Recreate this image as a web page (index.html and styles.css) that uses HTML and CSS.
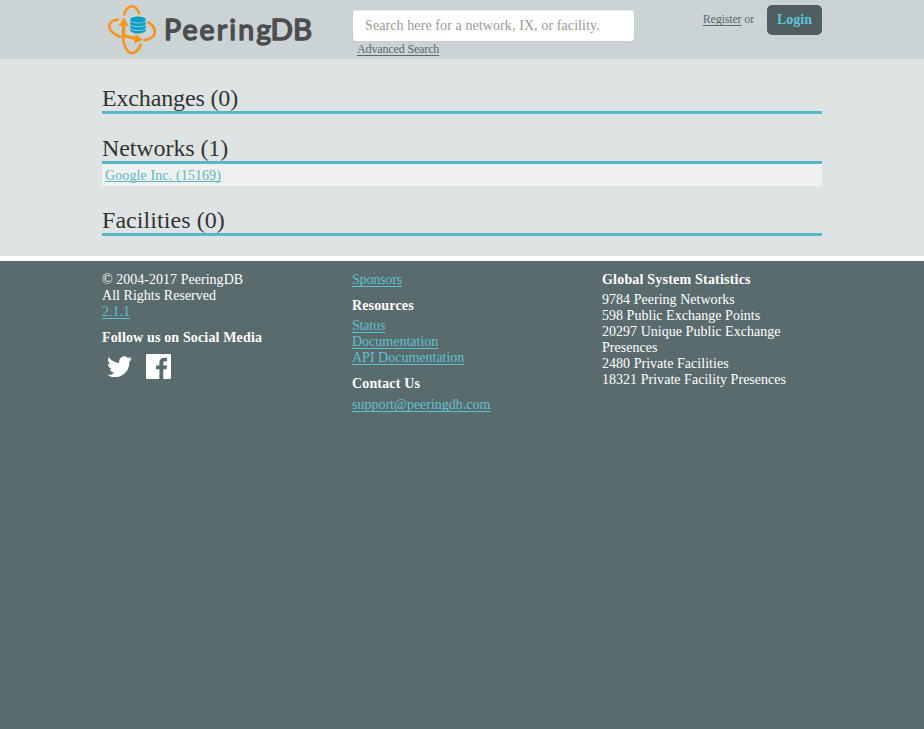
FILE: index.html
```html
<!DOCTYPE html>
<html lang="en">
<head>
<meta charset="utf-8">
<title>PeeringDB</title>
<link rel="stylesheet" href="styles.css">
</head>
<body>
<header class="header">
  <div class="container header-row">
    <a class="logo" aria-label="PeeringDB">
      <svg width="216" height="56" viewBox="102 0 216 56">
        <g fill="none" stroke="#f7941e" stroke-width="2.600">
          <path d="M124 15.500C125.500 9.500 128.500 6.200 132 6.200C135.500 6.200 138 9.500 139.500 14.500"/>
          <path d="M141 43.500C139 49.500 136 53 132 53C127.500 53 123.500 46 123 37"/>
          <path d="M119 19.500C113 20 109.200 22.500 109.200 26.500C109.200 31 114.500 34.500 121 37.200"/>
          <path d="M143.500 40.300C150 39.500 154.800 36.500 154.800 32C154.800 27.500 151.500 24 147.500 22"/>
        </g>
        <path d="M123.500 36.500V24" stroke="#f7941e" stroke-width="3.600" fill="none"/>
        <path d="M118.800 26L123.800 17.500L128.800 26Z" fill="#f7941e"/>
        <path d="M121.800 35Q129 37.500 137 38.500" stroke="#f7941e" stroke-width="3.400" fill="none"/>
        <path d="M135.500 34L143 39.700L134 43.500Z" fill="#f7941e"/>
        <path d="M130.300 19.500V30.500A7.700 2.900 0 0 0 145.700 30.500V19.500Z" fill="#0a9fc3"/>
        <ellipse cx="138" cy="19.300" rx="7.700" ry="2.800" fill="#0a9fc3"/>
        <path fill="none" stroke="#a9d0da" stroke-width=".8" d="M130.300 20.300A7.700 2.700 0 0 0 145.700 20.300M130.300 24.100A7.700 2.700 0 0 0 145.700 24.100M130.300 27.900A7.700 2.700 0 0 0 145.700 27.900"/>
        <g class="wordmark">
          <text x="164" y="39.800" textLength="107" lengthAdjust="spacing">Peering</text>
          <text x="270.500" y="39.800" textLength="41.500" lengthAdjust="spacingAndGlyphs">DB</text>
        </g>
      </svg>
    </a>
    <div class="search">
      <input class="search-input" type="text" placeholder="Search here for a network, IX, or facility.">
      <a class="advanced">Advanced Search</a>
    </div>
    <div class="account">
      <span class="signup"><a class="register">Register</a> or</span>
      <a class="login">Login</a>
    </div>
  </div>
</header>
<main class="main">
  <div class="container">
    <h2 class="results-title exchanges">Exchanges (0)</h2>
    <h2 class="results-title networks">Networks (1)</h2>
    <div class="result"><a class="link">Google Inc. (15169)</a></div>
    <h2 class="results-title facilities">Facilities (0)</h2>
  </div>
</main>
<footer class="footer">
  <div class="container columns">
    <div class="column">
      <div>© 2004-2017 PeeringDB</div>
      <div>All Rights Reserved</div>
      <div><a class="link">2.1.1</a></div>
      <h3 class="heading">Follow us on Social Media</h3>
      <div class="social">
        <svg width="25" height="21" viewBox="0 2 24 19.500" preserveAspectRatio="none"><path fill="#fff" d="M24 4.600a10 10 0 0 1-2.800.8 5 5 0 0 0 2.100-2.700 10 10 0 0 1-3.100 1.200 4.900 4.900 0 0 0-8.400 4.500A14 14 0 0 1 1.700 3.100a4.900 4.900 0 0 0 1.500 6.600 5 5 0 0 1-2.200-.6 4.900 4.900 0 0 0 3.900 4.900 5 5 0 0 1-2.200.1 4.900 4.900 0 0 0 4.600 3.400A10 10 0 0 1 0 19.500 14 14 0 0 0 21.500 7.100 10 10 0 0 0 24 4.600z"/></svg>
        <svg width="25" height="25" viewBox="0 0 25 25"><path fill="#fff" d="M1 0H24Q25 0 25 1V24Q25 25 24 25H17.300V15.300H20.500L21 11.500H17.300V9.100C17.300 8 17.600 7.300 19.200 7.300H21.100V3.900C20.800 3.800 19.600 3.700 18.300 3.700C15.300 3.700 13.400 5.500 13.400 8.700V11.500H10V15.300H13.400V25H1Q0 25 0 24V1Q0 0 1 0Z"/></svg>
      </div>
    </div>
    <div class="column">
      <div><a class="link tight">Sponsors</a></div>
      <h3 class="heading">Resources</h3>
      <div><a class="link tight">Status</a></div>
      <div><a class="link">Documentation</a></div>
      <div><a class="link">API Documentation</a></div>
      <h3 class="heading">Contact Us</h3>
      <div class="contact"><a class="link">support@peeringdb.com</a></div>
    </div>
    <div class="column stats">
      <h3 class="heading first">Global System Statistics</h3>
      <div>9784 Peering Networks</div>
      <div>598 Public Exchange Points</div>
      <div>20297 Unique Public Exchange Presences</div>
      <div>2480 Private Facilities</div>
      <div>18321 Private Facility Presences</div>
    </div>
  </div>
</footer>
</body>
</html>
```
FILE: styles.css
```css
* { box-sizing: border-box; }
body {
  margin: 0;
  min-height: 729px;
  display: flex;
  flex-direction: column;
  font: 14px/16px "Liberation Serif", serif;
  background: #5a6b6d;
}
.container { width: 720px; margin: 0 auto; }
.header { height: 59px; background: #cbd3d5; color: #5a6b6d; }
.header-row { display: flex; }
.logo { width: 250px; height: 56px; }
.logo svg { display: block; }
.wordmark {
  font: 400 28.5px Lato, sans-serif;
  fill: #4d4d4f;
  stroke: #4d4d4f;
  stroke-width: 1.5px;
  stroke-linejoin: round;
}
.search { width: 283px; padding-top: 9px; }
.search-input {
  display: block;
  width: 283px;
  height: 33px;
  padding: 0 12px;
  border: 1px solid #ccc;
  border-radius: 4px;
  box-shadow: inset 0 1px 1px rgba(0, 0, 0, .075);
  background: #fff;
  font: 14px "Liberation Serif", serif;
  letter-spacing: .095px;
}
.search-input::placeholder { color: #999; }
.advanced, .register {
  text-decoration: underline 1px;
  text-underline-offset: 2px;
  text-decoration-skip-ink: none;
}
.advanced {
  display: block;
  width: max-content;
  margin: -1px 0 0 5px;
  font-size: 12px;
  letter-spacing: -.14px;
}
.account {
  flex: 1;
  display: flex;
  justify-content: flex-end;
  gap: 13px;
  padding-top: 5px;
  font-size: 12px;
  line-height: 28px;
}
.signup { letter-spacing: -.16px; }
.login {
  width: 55px;
  height: 30px;
  border-radius: 5px;
  background: #4f5f61;
  color: #5fc5d5;
  font-size: 14px;
  font-weight: bold;
  line-height: 30px;
  text-align: center;
}
.main { height: 202px; padding-top: 25px; background: #dee4e4; border-bottom: 5px solid #fff; }
.results-title {
  height: 30px;
  margin: 0 0 20px;
  border-bottom: 3px solid #5bb7c5;
  color: #333;
  font-size: 24px;
  font-weight: normal;
  line-height: 28px;
}
.exchanges { letter-spacing: -.15px; }
.networks { letter-spacing: -.1px; }
.facilities { letter-spacing: .06px; }
.result {
  height: 22px;
  margin: -20px 0 20px;
  padding: 4px 3px 2px;
  background: #eff1f1;
  letter-spacing: .11px;
}
.link {
  color: #5bb7c5;
  text-decoration: underline 1px;
  text-underline-offset: 2px;
  text-decoration-skip-ink: none;
}
.result .link { text-underline-offset: 1px; }
.footer { flex: 1; padding-top: 11px; color: #fff; letter-spacing: .03px; }
.footer .link { color: #5fc0d0; letter-spacing: 0; }
.footer .tight { letter-spacing: -.18px; }
.columns { display: flex; gap: 30px; }
.column { width: 220px; }
.heading { margin: 10px 0 4px; font-size: 14px; line-height: 16px; letter-spacing: .15px; }
.first { margin-top: 0; letter-spacing: .2px; }
.social { display: flex; align-items: center; gap: 14px; padding: 4px 0 0 5px; }
.contact { padding-top: 1px; }
```
